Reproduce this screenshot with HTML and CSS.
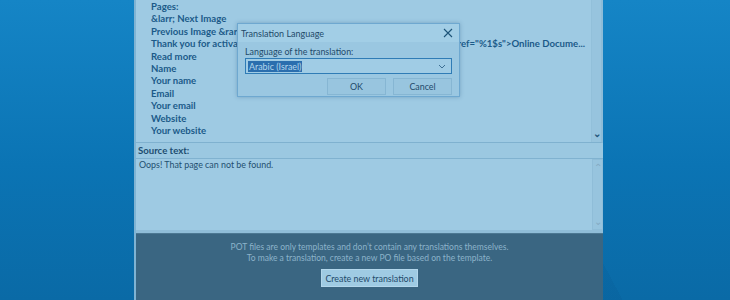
FILE: index.html
```html
<!DOCTYPE html>
<html lang="en">
<head>
  <meta charset="UTF-8">
  <title>Poedit - Translation Language</title>
  <link rel="stylesheet" href="styles.css">
</head>
<body>

<div class="desktop">
  <div class="app">
    <section class="strings">
      <ul class="string-list">
        <li>Pages:</li>
        <li>&amp;larr; Next Image</li>
        <li>Previous Image &amp;rarr;</li>
        <li class="long"><span>Thank you for activati</span><span class="tail">href="%1$s"&gt;Online Docume...</span></li>
        <li>Read more</li>
        <li>Name</li>
        <li>Your name</li>
        <li>Email</li>
        <li>Your email</li>
        <li>Website</li>
        <li>Your website</li>
      </ul>
      <div class="scrollbar">
        <span class="arrow down dark">&#8964;</span>
      </div>
    </section>

    <div class="source-label">Source text:</div>
    <section class="source">
      <p class="source-text">Oops! That page can not be found.</p>
      <div class="scrollbar light">
        <span class="arrow up">&#8963;</span>
        <span class="arrow down">&#8964;</span>
      </div>
    </section>

    <section class="pot-panel">
      <p>POT files are only templates and don&rsquo;t contain any translations themselves.<br>
      To make a translation, create a new PO file based on the template.</p>
      <button class="create-btn">Create new translation</button>
    </section>

    <div class="dialog">
      <div class="dialog-title">
        <span>Translation Language</span>
        <svg class="close" width="10" height="10" viewBox="0 0 10 10">
          <path d="M1 1 L9 9 M9 1 L1 9" stroke="#1d5378" stroke-width="1.1" fill="none"/>
        </svg>
      </div>
      <div class="dialog-body">
        <label class="field-label">Language of the translation:</label>
        <div class="select">
          <span class="selected">Arabic (Israel)</span>
          <svg width="8" height="5" viewBox="0 0 8 5">
            <path d="M1 1 L4 4 L7 1" stroke="#3d6f94" stroke-width="1" fill="none"/>
          </svg>
        </div>
        <div class="dialog-buttons">
          <button class="btn">OK</button>
          <button class="btn">Cancel</button>
        </div>
      </div>
    </div>
  </div>
</div>

</body>
</html>
```

FILE: styles.css
```css
html, body {
  margin: 0;
  height: 100%;
}
body {
  font-family: Lato, 'Open Sans', sans-serif;
  overflow: hidden;
}
.desktop {
  height: 300px;
  background:
    linear-gradient(62deg, transparent 0 55%, rgba(0, 40, 90, 0.06) 55% 70%, transparent 70%),
    linear-gradient(125deg, transparent 0 40%, rgba(255, 255, 255, 0.04) 40% 60%, transparent 60%),
    linear-gradient(180deg, #1585c6 0%, #0b74b4 55%, #0a6aa6 100%);
}
.app {
  position: relative;
  margin-left: 134px;
  width: 469px;
  height: 300px;
  display: flex;
  flex-direction: column;
  background-color: #9ecae3;
  border-left: 2px solid #7fb3d3;
  box-sizing: border-box;
}
.strings {
  height: 142px;
  display: flex;
  border-bottom: 1px solid #7fb1cf;
  border-right: 2px solid #8dbcd8;
}
.string-list {
  flex: 1;
  list-style: none;
  margin: 0;
  padding: 1px 0 0 15px;
  font-weight: bold;
  font-size: 9.6px;
  color: #1b5a89;
}
.string-list li {
  height: 12.4px;
  line-height: 12.4px;
  white-space: nowrap;
}
.string-list .long {
  display: flex;
}
.string-list .tail {
  margin-left: auto;
  padding-right: 6px;
}
.scrollbar {
  width: 9px;
  display: flex;
  flex-direction: column;
  justify-content: flex-end;
  align-items: center;
  background-color: #97c4de;
  border-left: 1px solid #92c0da;
}
.arrow {
  font-size: 10px;
  line-height: 8px;
  height: 8px;
  color: #84aac3;
}
.arrow.dark {
  color: #22557b;
  font-weight: bold;
  margin-bottom: 5px;
}
.scrollbar.light {
  justify-content: space-between;
  padding: 3px 0 4px;
  border: 1px solid #8fbdd8;
}
.source-label {
  height: 15px;
  line-height: 15px;
  padding-left: 2px;
  font-size: 9.6px;
  font-weight: bold;
  color: #1d4d70;
  background-color: #9bc8e1;
  border-bottom: 1px solid #80b2d0;
}
.source {
  height: 71px;
  display: flex;
  border-bottom: 3px solid #8fbdd8;
}
.source-text {
  flex: 1;
  margin: 0;
  padding: 0 0 0 3px;
  font-size: 8.9px;
  color: #234f70;
}
.pot-panel {
  flex: 1;
  background-color: #3a6682;
  border-top: 1px solid #4c7893;
  text-align: center;
  color: #8cb3ca;
  font-size: 8.5px;
}
.pot-panel p {
  margin: 8px 0 5px;
  line-height: 11px;
}
.create-btn {
  font-family: inherit;
  font-size: 8.9px;
  color: #1e4a6a;
  background-color: #9fcbe3;
  border: 1px solid #b3d7ec;
  padding: 0;
  width: 97px;
  height: 18px;
}
.dialog {
  position: absolute;
  left: 101px;
  top: 23px;
  width: 223px;
  height: 74px;
  box-sizing: border-box;
  border: 1px solid #6ea8d0;
  background-color: #9ac7e1;
  box-shadow: 0 0 4px rgba(40, 90, 130, 0.35);
  display: flex;
  flex-direction: column;
}
.dialog-title {
  height: 18px;
  display: flex;
  align-items: center;
  justify-content: space-between;
  padding: 0 6px 0 3px;
  background-color: #a2cee6;
  font-size: 9px;
  color: #1f4a6a;
}
.dialog-body {
  flex: 1;
  padding: 4px 7px 0 7px;
  display: flex;
  flex-direction: column;
}
.field-label {
  font-size: 8.9px;
  color: #1f4a6a;
  line-height: 11px;
}
.select {
  margin-top: 1px;
  height: 14px;
  border: 1px solid #2f7cb6;
  background-color: #a0cce5;
  display: flex;
  align-items: center;
  justify-content: space-between;
  padding: 0 5px 0 2px;
}
.selected {
  font-size: 8.9px;
  color: #b4d6ec;
  background-color: #2a6eae;
  padding: 0 1px;
  line-height: 11px;
}
.dialog-buttons {
  display: flex;
  justify-content: flex-end;
  gap: 7px;
  margin-top: 4px;
}
.btn {
  font-family: inherit;
  width: 59px;
  height: 17px;
  padding: 0;
  font-size: 8.9px;
  color: #1f4a6a;
  background-color: #98c5df;
  border: 1px solid #86b6d3;
}
```
